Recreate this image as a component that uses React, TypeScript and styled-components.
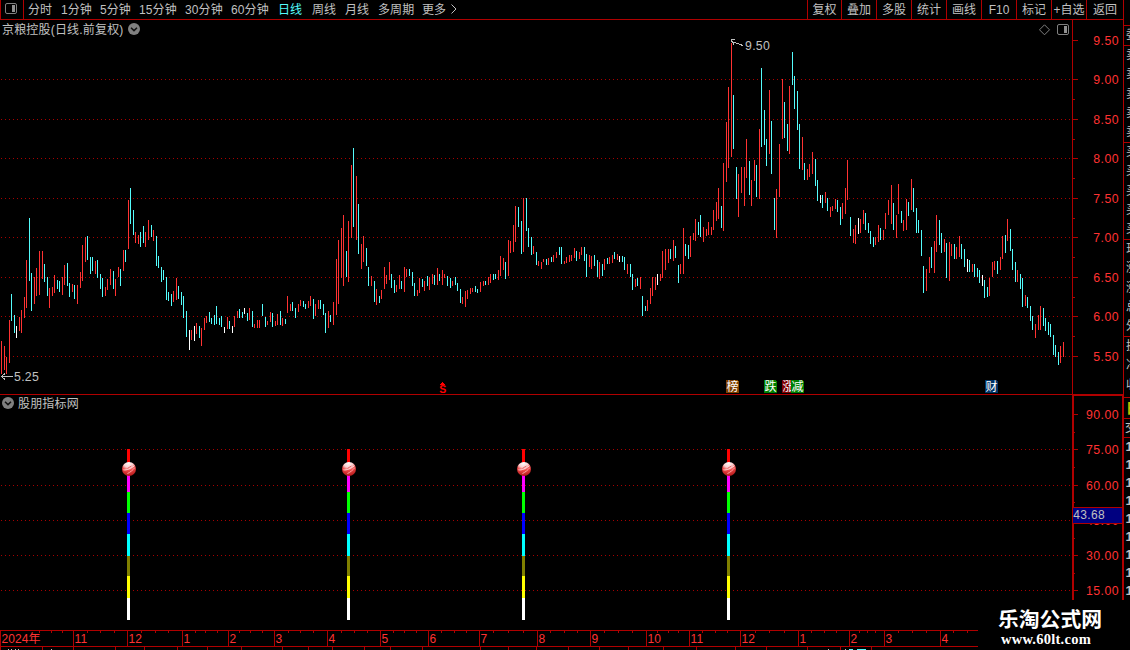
import React from "react";
import styled, { createGlobalStyle } from "styled-components";

const LINE = "#b00000";
const RISE = "#ff3232";
const FALL = "#54fcfc";
const GREY = "#c0c0c0";
const SANS = '"Liberation Sans", "Noto Sans CJK SC", sans-serif';

const GlobalStyle = createGlobalStyle`
  html, body { margin: 0; background: #000; overflow: hidden; }
  svg { display: block; }
`;

const Screen = styled.div`
  position: relative;
  display: flex;
  width: 1130px;
  height: 650px;
  overflow: hidden;
  background: #000;
  color: ${GREY};
  font: 12px/16px ${SANS};
`;

const Main = styled.main`
  display: flex;
  flex-direction: column;
  width: 1124px;
  flex: none;
`;

const Toolbar = styled.nav`
  display: flex;
  height: 19px;
  flex: none;
  border-bottom: 1px solid ${LINE};
`;

const PanelCell = styled.div`
  box-sizing: border-box;
  width: 24px;
  padding: 3px 0 0 4px;
  border: solid ${LINE};
  border-width: 0 1px;
`;

const Periods = styled.div`
  display: flex;
  flex: 1;
  padding-left: 4px;
`;

const Period = styled.span<{ $w: number; $active?: boolean }>`
  width: ${(p) => p.$w}px;
  line-height: 20px;
  white-space: nowrap;
  letter-spacing: 0.1px;
  color: ${(p) => (p.$active ? FALL : GREY)};
`;

const Tool = styled.span<{ $w: number }>`
  box-sizing: border-box;
  width: ${(p) => p.$w}px;
  border-left: 1px solid ${LINE};
  line-height: 20px;
  height: 19px;
  text-align: center;
  white-space: nowrap;
`;

const ToolEnd = styled.span`
  width: 1px;
  background: ${LINE};
`;

const Pane = styled.section<{ $h: number }>`
  position: relative;
  display: flex;
  height: ${(p) => p.$h}px;
  flex: none;
`;

const PaneTitle = styled.div`
  position: absolute;
  left: 2px;
  top: 0;
  display: flex;
  gap: 4px;
  height: 18px;
  line-height: 20px;
  white-space: nowrap;
  letter-spacing: 0.18px;

  svg { margin-top: 3px; }
`;

const PaneTools = styled.div`
  position: absolute;
  top: 4px;
  right: 55px;
  display: flex;
  gap: 6px;
`;

const SideBar = styled.aside`
  width: 6px;
  flex: none;
  overflow: hidden;
  padding-top: 25px;
`;

const SideGroup = styled.div<{ $h: number; $row: number; $color?: string; $x?: number }>`
  box-sizing: border-box;
  height: ${(p) => p.$h}px;
  padding-left: ${(p) => p.$x ?? 2}px;
  border-top: 1px solid ${LINE};
  overflow: hidden;
  color: ${(p) => p.$color ?? GREY};
  line-height: ${(p) => p.$row}px;
  white-space: nowrap;
`;

const SideRow = styled.div`
  width: 14px;
`;

const SelectedGroup = styled(SideGroup)`
  font-size: 14px;
  font-weight: bold;
`;

const Trades = styled(SideGroup)`
  font-size: 13px;
  font-weight: bold;
`;

const Watermark = styled.div`
  position: absolute;
  left: 978px;
  top: 600px;
  box-sizing: border-box;
  width: 152px;
  height: 50px;
  padding: 6px 0 0 20px;
  background: #000;
  color: #fff;
`;

const SiteName = styled.div`
  font: bold 20.8px/24px "Noto Sans CJK SC", sans-serif;
  white-space: nowrap;
`;

const SiteUrl = styled.div`
  padding-left: 3px;
  font: bold 14.5px/18px "Liberation Serif", serif;
  letter-spacing: 0.25px;
`;

type Tone = "r" | "c" | "w";
type Bar = [x: number, high: number, low: number, tone: Tone];
const TONES: Record<Tone, string> = { r: RISE, c: FALL, w: "#ffffff" };

const BARS: Bar[] = [
  [1,341,374,"r"],[4,346,370,"r"],[6,357,374,"r"],[9,320,363,"r"],[11,294,321,"c"],[14,315,333,"c"],
  [16,326,338,"w"],[19,317,331,"r"],[21,310,333,"r"],[24,297,318,"r"],[26,260,308,"r"],[29,218,281,"c"],
  [31,273,311,"c"],[34,277,304,"r"],[36,268,296,"r"],[39,251,295,"r"],[42,251,279,"r"],[44,264,282,"c"],
  [47,277,296,"c"],[49,288,308,"r"],[52,287,296,"r"],[54,275,293,"r"],[57,280,289,"c"],[59,281,292,"c"],
  [62,277,295,"r"],[64,265,285,"r"],[67,263,286,"c"],[69,283,297,"c"],[72,284,292,"r"],[74,285,299,"c"],
  [77,285,304,"r"],[80,272,288,"r"],[82,245,281,"r"],[85,237,262,"r"],[87,236,260,"c"],[90,257,274,"c"],
  [92,257,271,"c"],[95,261,274,"r"],[97,260,278,"c"],[100,274,289,"c"],[102,278,297,"c"],[105,287,296,"r"],
  [107,279,290,"r"],[110,269,285,"r"],[113,271,289,"c"],[115,279,296,"r"],[118,267,277,"r"],[120,269,286,"c"],
  [123,250,271,"r"],[125,250,262,"c"],[128,200,249,"r"],[130,188,224,"c"],[133,210,235,"c"],[135,232,243,"r"],
  [138,235,244,"r"],[140,232,247,"c"],[143,226,243,"c"],[145,232,247,"r"],[148,220,240,"r"],[151,225,237,"c"],
  [153,230,241,"r"],[156,236,266,"c"],[158,256,268,"c"],[161,267,282,"c"],[163,270,280,"c"],[166,277,300,"c"],
  [168,292,301,"c"],[171,294,306,"c"],[173,291,302,"r"],[176,278,300,"r"],[178,286,299,"c"],[181,292,305,"c"],
  [183,296,318,"c"],[186,311,337,"c"],[189,330,350,"w"],[191,330,340,"r"],[194,326,341,"w"],[196,323,334,"r"],
  [199,326,338,"c"],[201,328,346,"r"],[204,318,330,"r"],[206,316,323,"r"],[209,312,322,"c"],[211,318,324,"c"],
  [214,315,325,"c"],[216,306,324,"c"],[219,318,325,"c"],[221,316,327,"c"],[224,327,333,"w"],[227,317,329,"r"],
  [229,321,329,"c"],[232,326,333,"w"],[234,316,327,"r"],[237,311,318,"r"],[239,309,318,"c"],[242,312,318,"c"],
  [244,308,314,"w"],[247,313,321,"c"],[249,308,320,"r"],[252,311,327,"c"],[254,324,328,"r"],[257,320,328,"r"],
  [259,320,328,"r"],[262,304,316,"c"],[265,317,327,"c"],[267,321,325,"r"],[270,312,322,"r"],[272,313,327,"c"],
  [275,321,326,"r"],[277,314,325,"r"],[280,311,325,"c"],[282,318,326,"r"],[285,319,324,"c"],[287,296,313,"r"],
  [290,304,311,"r"],[292,302,311,"c"],[295,308,318,"c"],[298,304,312,"r"],[300,300,306,"r"],[303,301,307,"c"],
  [305,304,309,"c"],[308,301,308,"r"],[310,296,306,"r"],[313,299,319,"c"],[315,304,316,"r"],[318,300,309,"r"],
  [320,300,309,"c"],[323,304,315,"c"],[325,313,333,"c"],[328,311,328,"r"],[330,315,322,"c"],[333,302,325,"r"],
  [336,259,315,"r"],[338,240,304,"r"],[341,228,278,"r"],[343,215,286,"r"],[346,251,277,"c"],[348,221,282,"r"],
  [351,165,238,"r"],[353,148,227,"c"],[356,176,240,"r"],[358,204,254,"c"],[361,244,269,"r"],[363,236,262,"r"],
  [366,248,266,"c"],[368,267,286,"c"],[371,276,286,"r"],[374,281,302,"c"],[376,289,305,"r"],[379,296,303,"c"],
  [381,290,299,"r"],[384,267,289,"r"],[386,275,284,"r"],[389,262,280,"r"],[391,274,288,"c"],[394,280,293,"c"],
  [396,285,292,"r"],[399,275,289,"r"],[401,281,289,"c"],[404,267,292,"r"],[406,269,277,"r"],[409,269,276,"c"],
  [412,272,286,"c"],[414,283,296,"c"],[417,290,296,"r"],[419,278,293,"r"],[422,279,287,"c"],[424,281,291,"r"],
  [427,276,286,"c"],[429,277,290,"r"],[432,274,284,"r"],[434,275,285,"c"],[437,268,285,"r"],[439,274,281,"c"],
  [442,270,285,"r"],[444,274,278,"r"],[447,276,286,"c"],[450,278,288,"c"],[452,281,286,"r"],[455,277,285,"c"],
  [457,283,291,"c"],[460,289,303,"c"],[462,297,304,"r"],[465,291,307,"r"],[467,290,299,"r"],[470,288,294,"r"],
  [472,288,292,"r"],[475,286,292,"c"],[477,289,293,"c"],[480,282,292,"r"],[483,281,286,"r"],[485,281,285,"c"],
  [488,277,285,"r"],[490,274,283,"r"],[493,274,280,"c"],[495,274,279,"c"],[498,270,280,"r"],[500,256,276,"r"],
  [503,258,270,"r"],[505,262,279,"c"],[508,240,276,"r"],[510,241,253,"r"],[513,225,252,"r"],[515,206,242,"r"],
  [518,207,227,"c"],[521,221,254,"c"],[523,198,252,"r"],[526,198,231,"c"],[528,228,247,"c"],[531,237,255,"c"],
  [533,246,254,"r"],[536,252,265,"c"],[538,261,266,"r"],[541,262,269,"r"],[543,259,262,"r"],[546,259,265,"c"],
  [548,258,265,"r"],[551,257,262,"c"],[553,255,262,"r"],[556,252,258,"r"],[559,247,255,"c"],[561,247,264,"c"],
  [564,261,264,"r"],[566,257,263,"r"],[569,255,262,"r"],[571,255,261,"r"],[574,248,258,"r"],[576,251,261,"c"],
  [579,252,259,"r"],[581,247,255,"r"],[584,247,261,"c"],[586,254,277,"c"],[589,255,267,"r"],[591,256,269,"r"],
  [594,255,266,"c"],[597,260,277,"c"],[599,262,279,"r"],[602,264,276,"c"],[604,259,270,"r"],[607,258,264,"c"],
  [609,257,264,"r"],[612,255,263,"r"],[614,252,259,"c"],[617,254,260,"r"],[619,256,262,"w"],[622,256,262,"c"],
  [624,257,270,"c"],[627,264,274,"r"],[630,264,277,"c"],[632,274,290,"c"],[635,279,287,"r"],[637,278,286,"c"],
  [640,277,289,"r"],[642,296,316,"c"],[645,306,311,"c"],[647,300,311,"r"],[650,288,304,"r"],[652,277,296,"r"],
  [655,277,290,"r"],[657,274,285,"w"],[660,274,281,"r"],[662,251,278,"r"],[665,249,270,"r"],[668,249,263,"r"],
  [670,249,259,"c"],[673,240,261,"r"],[675,246,258,"c"],[678,265,283,"c"],[680,264,274,"r"],[683,228,274,"r"],
  [685,244,256,"c"],[688,245,259,"c"],[690,236,257,"r"],[693,233,240,"r"],[695,219,241,"r"],[698,222,235,"c"],
  [700,215,237,"c"],[703,227,242,"r"],[706,229,236,"r"],[708,222,235,"r"],[711,227,235,"r"],[713,210,230,"r"],
  [716,202,221,"r"],[718,188,219,"r"],[721,206,228,"c"],[723,163,231,"r"],[726,122,182,"r"],[728,87,168,"r"],
  [731,43,157,"r"],[733,95,149,"c"],[736,167,199,"c"],[738,174,217,"r"],[741,167,193,"r"],[744,167,206,"r"],
  [746,139,178,"r"],[749,161,195,"c"],[751,180,206,"r"],[754,160,181,"r"],[756,165,197,"c"],[759,129,199,"r"],
  [761,68,147,"c"],[764,110,145,"c"],[766,139,166,"c"],[769,90,154,"r"],[771,121,174,"c"],[774,198,230,"c"],
  [776,189,238,"r"],[779,144,197,"r"],[782,79,139,"r"],[784,102,138,"c"],[787,124,151,"c"],[789,86,154,"r"],
  [792,52,85,"c"],[794,76,109,"c"],[797,91,130,"c"],[799,124,169,"c"],[802,137,170,"r"],[804,163,180,"c"],
  [807,169,180,"r"],[809,164,177,"r"],[812,152,174,"r"],[815,159,186,"c"],[817,180,201,"c"],[820,195,203,"w"],
  [822,195,208,"c"],[825,192,203,"r"],[827,198,211,"c"],[830,207,217,"r"],[832,206,211,"r"],[835,199,209,"r"],
  [837,200,212,"c"],[840,207,225,"c"],[842,203,219,"r"],[845,188,214,"r"],[847,160,200,"r"],[850,217,236,"c"],
  [853,229,243,"r"],[855,225,244,"r"],[858,218,234,"w"],[860,219,233,"r"],[863,210,224,"r"],[865,213,230,"c"],
  [868,223,233,"c"],[870,231,244,"c"],[873,237,247,"c"],[875,237,245,"r"],[878,225,242,"r"],[880,228,240,"c"],
  [883,230,240,"r"],[885,213,229,"r"],[888,200,215,"r"],[891,185,224,"r"],[893,203,230,"c"],[896,215,238,"r"],
  [898,184,214,"r"],[901,211,223,"c"],[903,220,231,"r"],[906,199,230,"r"],[908,202,216,"c"],[911,179,210,"r"],
  [913,188,212,"c"],[916,208,233,"c"],[918,220,233,"c"],[921,230,256,"c"],[923,266,293,"c"],[926,269,291,"r"],
  [929,257,273,"r"],[931,247,268,"c"],[934,241,273,"r"],[936,215,252,"r"],[939,220,245,"c"],[941,233,253,"c"],
  [944,239,252,"r"],[946,243,278,"c"],[949,242,281,"r"],[951,244,256,"r"],[954,244,259,"c"],[956,247,259,"r"],
  [959,236,257,"r"],[961,244,259,"c"],[964,249,267,"c"],[967,259,272,"w"],[969,260,272,"c"],[972,264,272,"r"],
  [974,264,277,"c"],[977,268,277,"c"],[979,270,283,"c"],[982,275,286,"w"],[984,280,298,"c"],[987,287,297,"c"],
  [989,278,296,"r"],[992,262,277,"r"],[994,261,270,"r"],[997,261,274,"c"],[1000,257,270,"r"],[1002,236,259,"r"],
  [1005,235,253,"c"],[1007,219,241,"r"],[1010,229,251,"c"],[1012,249,270,"c"],[1015,262,282,"c"],[1017,270,282,"r"],
  [1020,274,289,"c"],[1022,278,307,"c"],[1025,295,306,"r"],[1027,297,308,"c"],[1030,306,321,"c"],[1032,316,330,"c"],
  [1035,324,338,"r"],[1038,315,330,"r"],[1040,306,330,"r"],[1043,308,326,"c"],[1045,318,331,"c"],[1048,322,335,"c"],
  [1050,324,337,"c"],[1053,335,355,"c"],[1055,345,357,"c"],[1058,352,365,"c"],[1060,346,363,"r"],[1063,342,357,"r"],
];

const PRICE_TICKS: [number, string][] = [
  [40, "9.50"], [79, "9.00"], [119, "8.50"], [158, "8.00"], [198, "7.50"],
  [237, "7.00"], [277, "6.50"], [316, "6.00"], [356, "5.50"],
];
const PRICE_MINOR = [99, 139, 178, 218, 257, 297, 336];

const SIGNAL_TICKS: [number, string][] = [
  [414, "90.00"], [449, "75.00"], [485, "60.00"], [520, "45.00"], [555, "30.00"], [590, "15.00"],
];
const SIGNAL_MINOR = [432, 467, 502, 538, 573];

const SEGMENTS: [number, number, string][] = [
  [449, 470, "#ff0000"], [470, 492, "#ff00ff"], [492, 513, "#00ff00"], [513, 534, "#0000ff"],
  [534, 556, "#00ffff"], [556, 576, "#808000"], [576, 598, "#ffff00"], [598, 620, "#ffffff"],
];
const SIGNALS = [127, 347, 522, 727];

const EVENTS: [number, string, string][] = [
  [726, "榜", "#804000"], [764, "跌", "#008000"], [782, "涨", "#800000"], [791, "减", "#008000"], [985, "财", "#003366"],
];

const MONTHS: [number, string][] = [
  [0, "2024年"], [73, "11"], [127, "12"], [182, "1"], [228, "2"], [274, "3"], [327, "4"], [380, "5"], [428, "6"],
  [479, "7"], [537, "8"], [590, "9"], [646, "10"], [689, "11"], [740, "12"], [798, "1"], [849, "2"], [884, "3"], [940, "4"],
];
const WEEK_TICKS = [
  39, 51, 62, 87, 100, 114, 141, 155, 168, 195, 205, 217, 239, 250, 262, 288, 300, 313, 341, 354, 367, 393, 404, 416,
  441, 454, 466, 493, 508, 523, 550, 564, 577, 604, 618, 632, 657, 668, 678, 702, 715, 727, 755, 769, 784, 811, 824,
  836, 859, 867, 875, 898, 912, 926, 953, 967,
];
const TAB_EDGES = [
  0, 42, 73, 115, 144, 177, 207, 241, 282, 308, 332, 364, 390, 422, 480, 508, 536, 568, 599, 628, 663, 696, 735, 766,
  807, 840, 871,
];

const PERIODS: [string, number][] = [
  ["分时", 33], ["1分钟", 39], ["5分钟", 39], ["15分钟", 46], ["30分钟", 46], ["60分钟", 47],
  ["日线", 34], ["周线", 33], ["月线", 33], ["多周期", 44], ["更多", 28],
];
const TOOLS: [string, number][] = [
  ["复权", 34], ["叠加", 35], ["多股", 35], ["统计", 35], ["画线", 35], ["F10", 35], ["标记", 35], ["+自选", 35], ["返回", 37],
];

const PanelIcon = () => (
  <svg width="12" height="12" viewBox="0 0 12 12">
    <rect x="0.5" y="0.5" width="11" height="10" rx="1.5" fill="none" stroke="#808080" />
    <rect x="7" y="2" width="3" height="7" fill="#909090" />
  </svg>
);

const ChevronBadge = () => (
  <svg width="12" height="12" viewBox="0 0 12 12">
    <circle cx="6" cy="6" r="6" fill="#808080" />
    <path d="M3 4.8 6 7.6 9 4.8" fill="none" stroke="#111" strokeWidth="1.5" />
  </svg>
);

const GridLine = ({ y }: { y: number }) => (
  <line x1="1" x2="1072" y1={y + 0.5} y2={y + 0.5} stroke="#a80000" strokeDasharray="1 3" shapeRendering="crispEdges" />
);

const AxisLabel = ({ y, text }: { y: number; text: string }) => (
  <text x="1119" y={y + 5} textAnchor="end" fill={RISE} fontSize="12.3" letterSpacing="0.45" fontFamily={SANS}>{text}</text>
);

const Ticks = ({ major, minor }: { major: number[]; minor: number[] }) => (
  <g fill={LINE}>
    {major.map((y) => <rect key={y} x="1073" y={y} width="5" height="1" />)}
    {minor.map((y) => <rect key={y} x="1073" y={y} width="2" height="1" />)}
  </g>
);

const Ball = ({ x }: { x: number }) => (
  <g transform={`translate(${x} 469)`}>
    <circle r="7" fill="url(#ball)" />
    <path d="M-5.6 0.8C-2 1.5 1.5-0.6 5.4-3.2" stroke="#ffdada" strokeWidth="1" fill="none" />
    <path d="M-1.6 4.6C1 3.4 4 1 5.8-1.4" stroke="#ffb0b0" strokeWidth="0.9" fill="none" />
    <path d="M-1.5-0.6 2.4-3" stroke="#e86060" strokeWidth="0.9" fill="none" />
  </g>
);

const PriceChart = () => (
  <svg width="1124" height="374" viewBox="0 20 1124 374" shapeRendering="crispEdges">
    {PRICE_TICKS.slice(1).map(([y]) => <GridLine key={y} y={y} />)}
    {BARS.map(([x, high, low, tone]) => (
      <rect key={x} x={x} y={high} width="1" height={low - high} fill={TONES[tone]} />
    ))}
    <rect x="1072" y="20" width="1" height="374" fill={LINE} />
    <rect x="1123" y="20" width="1" height="374" fill={LINE} />
    <Ticks major={PRICE_TICKS.map(([y]) => y)} minor={PRICE_MINOR} />
    {PRICE_TICKS.map(([y, text]) => <AxisLabel key={y} y={y} text={text} />)}
    <g fill="none" stroke={GREY}>
      <path d="M743 45.5 731.5 41.5M735 39.5H732L731.5 41.5 734 44.5" />
      <path d="M13 376.5H1.5M5 373.5 1.5 376.5 5 379.5" />
    </g>
    <g fill={GREY} fontSize="12.3" letterSpacing="0.3" fontFamily={SANS}>
      <text x="745" y="50">9.50</text>
      <text x="14" y="381">5.25</text>
    </g>
    <g fill="#ff0000">
      <path d="M439.5 385 442.5 381.5 445.5 385Z" />
      <text x="439.2" y="393" fontSize="10.5" fontWeight="bold" fontFamily={SANS}>S</text>
    </g>
    {EVENTS.map(([x, text, fill]) => (
      <g key={x}>
        <path d={`M${x} 380h11l2 2v11h-13z`} fill={fill} />
        <text x={x + 0.5} y="391" fontSize="12" fill="#fff" fontFamily={SANS}>{text}</text>
      </g>
    ))}
  </svg>
);

const SignalChart = () => (
  <svg width="1124" height="236" viewBox="0 394 1124 236">
    <defs>
      <radialGradient id="ball" cx="0.45" cy="0.05" r="0.95">
        <stop offset="0" stopColor="#ffffff" />
        <stop offset="0.35" stopColor="#fbd0d0" />
        <stop offset="0.58" stopColor="#f04a4a" />
        <stop offset="1" stopColor="#b01818" />
      </radialGradient>
    </defs>
    <rect y="394" width="1124" height="1" fill={LINE} />
    {SIGNAL_TICKS.slice(1).map(([y]) => <GridLine key={y} y={y} />)}
    {SIGNALS.map((x) => (
      <g key={x}>
        {SEGMENTS.map(([top, bottom, fill]) => (
          <rect key={top} x={x} y={top} width="3" height={bottom - top} fill={fill} />
        ))}
        <Ball x={x + 2} />
      </g>
    ))}
    <path d="M1073 600V395H1123V600" fill="none" stroke={LINE} strokeWidth="2" />
    <Ticks major={SIGNAL_TICKS.map(([y]) => y)} minor={SIGNAL_MINOR} />
    {SIGNAL_TICKS.map(([y, text]) => <AxisLabel key={y} y={y} text={text} />)}
    <rect x="1073" y="507" width="49" height="17" fill={LINE} />
    <rect x="1073" y="508" width="49" height="15" fill="#000080" />
    <text x="1073.3" y="519" fill={GREY} fontSize="12" letterSpacing="0.35" fontFamily={SANS}>43.68</text>
  </svg>
);

const TimeAxis = () => (
  <svg width="1124" height="20" viewBox="0 630 1124 20">
    <g fill={LINE}>
      <rect y="630" width="978" height="1" />
      <rect y="646" width="978" height="1" />
      {WEEK_TICKS.map((x) => <rect key={x} x={x} y="631" width="1" height="2" />)}
      {MONTHS.map(([x]) => <rect key={x} x={x} y="631" width="1" height="15" />)}
      {TAB_EDGES.map((x) => <rect key={x} x={x} y="647" width="1" height="3" />)}
    </g>
    {MONTHS.map(([x, text]) => (
      <text key={x} x={x + 1.5} y="643" fill={RISE} fontSize="12" letterSpacing="0.1" fontFamily={SANS}>{text}</text>
    ))}
    <path d="M8 649.5H9M11 649.5H12M15 649.5H16M18 649.5H19M51 649.5H52M828 649.5H829M845 649.5H846" stroke={GREY} />
    <path d="M849 649.5H853M857 649.5H866" stroke={FALL} />
  </svg>
);

const Rows = ({ items }: { items: string[] }) => (
  <>{items.map((item, i) => <SideRow key={i}>{item}</SideRow>)}</>
);

export default function App() {
  return (
    <Screen>
      <GlobalStyle />
      <Main>
        <Toolbar>
          <PanelCell><PanelIcon /></PanelCell>
          <Periods>
            {PERIODS.map(([name, w]) => <Period key={name} $w={w} $active={name === "日线"}>{name}</Period>)}
            <svg width="8" height="18" viewBox="0 0 8 18">
              <path d="M1.5 4.5 6 9 1.5 13.5" fill="none" stroke={GREY} />
            </svg>
          </Periods>
          {TOOLS.map(([name, w]) => <Tool key={name} $w={w}>{name}</Tool>)}
          <ToolEnd />
        </Toolbar>
        <Pane $h={374}>
          <PriceChart />
          <PaneTitle>京粮控股(日线.前复权)<ChevronBadge /></PaneTitle>
          <PaneTools>
            <svg width="12" height="12" viewBox="0 0 12 12">
              <path d="M5.5 .8 10.5 5.8 5.5 10.8 .5 5.8Z" fill="none" stroke="#808080" />
            </svg>
            <PanelIcon />
          </PaneTools>
        </Pane>
        <Pane $h={236}>
          <SignalChart />
          <PaneTitle><ChevronBadge />股朋指标网</PaneTitle>
        </Pane>
        <TimeAxis />
      </Main>
      <SideBar>
        <SideGroup $h={20} $row={19}><Rows items={["委"]} /></SideGroup>
        <SideGroup $h={97} $row={19.3}><Rows items={["卖", "卖", "卖", "卖", "卖"]} /></SideGroup>
        <SideGroup $h={97} $row={19.3}><Rows items={["买", "买", "买", "买", "买"]} /></SideGroup>
        <SideGroup $h={97} $row={19.3}><Rows items={["现", "涨", "涨", "总", "外"]} /></SideGroup>
        <SideGroup $h={61} $row={19.3}><Rows items={["换", "净", "收"]} /></SideGroup>
        <SelectedGroup $h={21} $row={20} $color="#c0c000" $x={2}><Rows items={["日"]} /></SelectedGroup>
        <SideGroup $h={19} $row={18} $x={1}><Rows items={["交"]} /></SideGroup>
        <Trades $h={163} $row={18} $x={1.5}><Rows items={Array(9).fill("1")} /></Trades>
      </SideBar>
      <Watermark>
        <SiteName>乐淘公式网</SiteName>
        <SiteUrl>www.60lt.com</SiteUrl>
      </Watermark>
    </Screen>
  );
}
